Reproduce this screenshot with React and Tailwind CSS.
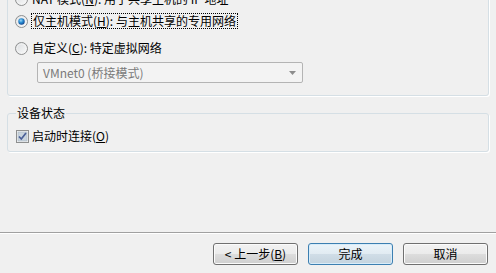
const font = "font-['Noto_Sans_CJK_SC','Microsoft_YaHei',sans-serif]";

function Radio({ checked }) {
  return (
    <svg width="13" height="13" viewBox="0 0 13 13" className="shrink-0">
      <defs>
        <linearGradient id="rfill" x1="0" y1="0" x2="1" y2="1">
          <stop offset="0" stopColor="#d9dcdf" />
          <stop offset="1" stopColor="#fbfbfb" />
        </linearGradient>
        <radialGradient id="rdot" cx="0.4" cy="0.35" r="0.7">
          <stop offset="0" stopColor="#9fd6f6" />
          <stop offset="0.45" stopColor="#2a8fd4" />
          <stop offset="1" stopColor="#10408a" />
        </radialGradient>
      </defs>
      <circle cx="6.5" cy="6.5" r="6" fill="url(#rfill)" stroke="#8e8f8f" />
      <circle cx="6.5" cy="6.5" r="4.5" fill="none" stroke="#f4f4f4" strokeWidth="0.8" />
      {checked ? <circle cx="6.5" cy="6.5" r="3.2" fill="url(#rdot)" /> : null}
    </svg>
  );
}

function Checkbox() {
  return (
    <svg width="13" height="13" viewBox="0 0 13 13" className="shrink-0">
      <rect x="0.5" y="0.5" width="12" height="12" fill="#f4f4f4" stroke="#8e8f8f" />
      <rect x="2" y="2" width="9" height="9" fill="#c9d4de" stroke="#a9b6c3" strokeWidth="0.6" />
      <path d="M3 6.5 L5.3 9 L10 3" fill="none" stroke="#4a5f97" strokeWidth="1.7" />
    </svg>
  );
}

function Button({ children, primary }) {
  return (
    <button
      className={
        primary
          ? "flex h-[22px] w-[85px] items-center justify-center rounded-[3px] border border-[#3c7fb1] bg-[linear-gradient(#ebf4fa_0%,#e1ebf2_50%,#d0dde7_51%,#c4d3de_100%)] text-[12px] text-black shadow-[inset_0_0_0_1px_#d8ecf9]"
          : "flex h-[22px] w-[85px] items-center justify-center rounded-[3px] border border-[#707070] bg-[linear-gradient(#f2f2f2_0%,#ebebeb_50%,#dddddd_51%,#cfcfcf_100%)] text-[12px] text-black shadow-[inset_0_0_0_1px_#fbfbfb]"
      }
    >
      {children}
    </button>
  );
}

export default function App() {
  return (
    <div className={`flex h-[273px] w-[496px] flex-col overflow-hidden bg-[#f0f0f0] text-[12px] leading-[16px] text-black ${font}`}>
      <div className="mx-[7px] -mt-[19px] rounded-[3px] border border-[#d5dfe5] px-[7px] pb-[12px] pt-[9px] shadow-[1px_1px_0_#ffffff]">
        <div className="flex h-4 items-center gap-[4px]">
          <Radio />
          <span>NAT 模式(<u>N</u>): 用于共享主机的 IP 地址</span>
        </div>
        <div className="mt-[6px] flex h-4 items-center gap-[3px]">
          <Radio checked />
          <span className="border border-dotted border-black px-[1px] leading-[14px]">
            仅主机模式(<u>H</u>): 与主机共享的专用网络
          </span>
        </div>
        <div className="mt-[11px] flex h-4 items-center gap-[4px]">
          <Radio />
          <span>自定义(<u>C</u>): 特定虚拟网络</span>
        </div>
        <div className="ml-[22px] mt-[6px] flex h-[21px] w-[266px] items-center justify-between rounded-[2px] border border-[#b4b4b4] bg-[#f3f3f3] pl-[5px] pr-[5px] text-[#7a7a7a]">
          <span>VMnet0 (桥接模式)</span>
          <svg width="8" height="4" viewBox="0 0 8 4">
            <path d="M0 0 H7 L3.5 4 Z" fill="#8c8c8c" />
          </svg>
        </div>
      </div>

      <fieldset className="mx-[7px] mt-[10px] rounded-[3px] border border-[#d5dfe5] px-[8px] pb-[7px] shadow-[1px_1px_0_#ffffff]">
        <legend className="px-[1px] leading-[14px]">设备状态</legend>
        <div className="mt-[8px] flex h-4 items-center gap-[3px]">
          <Checkbox />
          <span>启动时连接(<u>O</u>)</span>
        </div>
      </fieldset>

      <div className="flex-1" />

      <div className="h-[1px] bg-[#a0a0a0]" />
      <div className="h-[1px] bg-[#ffffff]" />
      <div className="flex justify-end gap-[10px] pb-[8px] pr-[8px] pt-[9px]">
        <Button>
          &lt; 上一步(<u>B</u>)
        </Button>
        <Button primary>完成</Button>
        <Button>取消</Button>
      </div>
    </div>
  );
}
